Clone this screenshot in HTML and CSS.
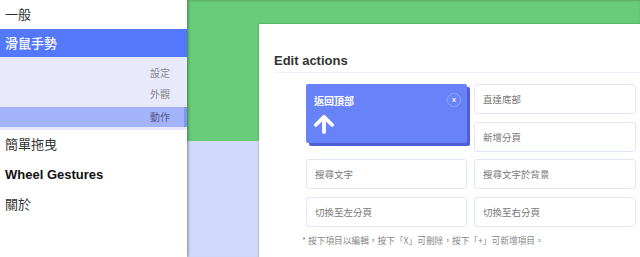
FILE: index.html
```html
<!DOCTYPE html>
<html lang="zh-Hant">
<head>
<meta charset="utf-8">
<title>Edit actions</title>
<link rel="stylesheet" href="styles.css">
</head>
<body>
<div class="app">
  <nav class="sidebar">
    <div class="nav-item">一般</div>
    <div class="nav-item active">滑鼠手勢</div>
    <div class="sub-list">
      <div class="sub-item">設定</div>
      <div class="sub-item">外觀</div>
      <div class="sub-item current">動作</div>
    </div>
    <div class="nav-item lower">簡單拖曳</div>
    <div class="nav-item lower latin">Wheel Gestures</div>
    <div class="nav-item lower">關於</div>
  </nav>
  <main class="main">
    <section class="card">
      <h2 class="card-title">Edit actions</h2>
      <div class="action-grid">
        <div class="action selected">
          <div class="selected-head">
            <span class="selected-name">返回頂部</span>
            <span class="close">x</span>
          </div>
          <svg class="arrow" width="22" height="20" viewBox="0 0 22 20">
            <path d="M11 18V3.5M2.8 11L11 2.8L19.2 11" fill="none" stroke="#fff" stroke-width="3.8" stroke-linecap="round" stroke-linejoin="round"/>
          </svg>
        </div>
        <div class="action">直達底部</div>
        <div class="action">新增分頁</div>
        <div class="action">搜尋文字</div>
        <div class="action">搜尋文字於背景</div>
        <div class="action">切換至左分頁</div>
        <div class="action">切換至右分頁</div>
      </div>
      <p class="note">* 按下項目以編輯，按下「X」可刪除，按下「+」可新增項目。</p>
    </section>
  </main>
</div>
</body>
</html>
```

FILE: styles.css
```css
* { box-sizing: border-box; }
html, body {
  margin: 0;
  padding: 0;
  width: 640px;
  height: 257px;
  overflow: hidden;
  font-family: "Liberation Sans", "Noto Sans CJK TC", sans-serif;
}
.app {
  display: flex;
  height: 257px;
}
.sidebar {
  width: 187px;
  flex: none;
  background: #fff;
  position: relative;
  z-index: 2;
  box-shadow: 1px 0 3px rgba(0, 0, 0, 0.35);
}
.nav-item {
  height: 29px;
  line-height: 29px;
  padding-left: 5px;
  font-size: 13px;
  color: #333;
  font-family: "Liberation Serif", "Noto Sans CJK TC", serif;
}
.nav-item.active {
  height: 28px;
  line-height: 28px;
  background: #5478fc;
  color: #fff;
  font-family: "Noto Sans CJK TC", sans-serif;
  font-weight: 500;
}
.nav-item.lower {
  height: 30px;
  line-height: 30px;
}
.nav-item.latin {
  font-family: "Liberation Sans", sans-serif;
  font-weight: bold;
  color: #111;
}
.sub-list {
  background: #e8eafc;
  padding: 5px 0 3px;
}
.sub-item {
  height: 21px;
  line-height: 21px;
  text-align: right;
  padding-right: 17px;
  font-size: 10px;
  color: #888;
  font-family: "Noto Sans CJK TC", sans-serif;
}
.sub-item.current {
  margin-top: 3px;
  height: 20px;
  line-height: 20px;
  background: #a3b4fc;
  color: #555a88;
  border-right: 3px solid #8096f4;
  padding-right: 14px;
}
.main {
  flex: 1;
  min-width: 0;
  background: linear-gradient(to bottom, #68cc78 0, #68cc78 141px, #d1dafd 141px, #d1dafd 100%);
  box-shadow: inset 0 1px 2px rgba(0, 0, 0, 0.15);
  padding: 24px 0 0 72px;
  overflow: hidden;
}
.card {
  background: #fff;
  height: 260px;
  width: 420px;
  padding: 29px 0 0 15px;
  box-shadow: 0 0 2px rgba(0, 80, 20, 0.45);
}
.card-title {
  margin: 0;
  font-size: 13px;
  line-height: 16px;
  font-weight: bold;
  color: #333;
  padding-bottom: 3px;
  border-bottom: 1px solid #eef0fb;
}
.action-grid {
  display: grid;
  grid-template-columns: 161px 162px;
  grid-auto-rows: 30px;
  column-gap: 7px;
  row-gap: 7.5px;
  margin: 11px 0 0 32px;
}
.action {
  background: #fff;
  border: 1px solid #e2e6fb;
  border-radius: 3px;
  font-family: "Noto Sans CJK TC", sans-serif;
  font-size: 9.5px;
  color: #777;
  padding-left: 8px;
  display: flex;
  align-items: center;
}
.action.selected {
  grid-row: span 2;
  align-self: start;
  height: 59px;
  background: #6882f9;
  border: none;
  border-radius: 2px;
  box-shadow: 3px 3px 0 #4d5fd3;
  display: block;
  padding: 10px 6px 0 8px;
  color: #fff;
}
.selected-head {
  display: flex;
  justify-content: space-between;
  align-items: center;
  height: 12px;
}
.selected-name {
  font-size: 10px;
  font-weight: bold;
  color: #fff;
}
.close {
  width: 14px;
  height: 14px;
  border: 1px solid rgba(255, 255, 255, 0.28);
  border-radius: 50%;
  font-family: "Liberation Sans", sans-serif;
  font-size: 8px;
  font-weight: bold;
  line-height: 12px;
  text-align: center;
  color: rgba(255, 255, 255, 0.9);
}
.arrow {
  display: block;
  margin-top: 8px;
  margin-left: -1px;
}
.note {
  margin: 8px 0 0 28px;
  font-family: "Noto Sans CJK TC", sans-serif;
  font-size: 8.7px;
  line-height: 12px;
  color: #888;
}
```
